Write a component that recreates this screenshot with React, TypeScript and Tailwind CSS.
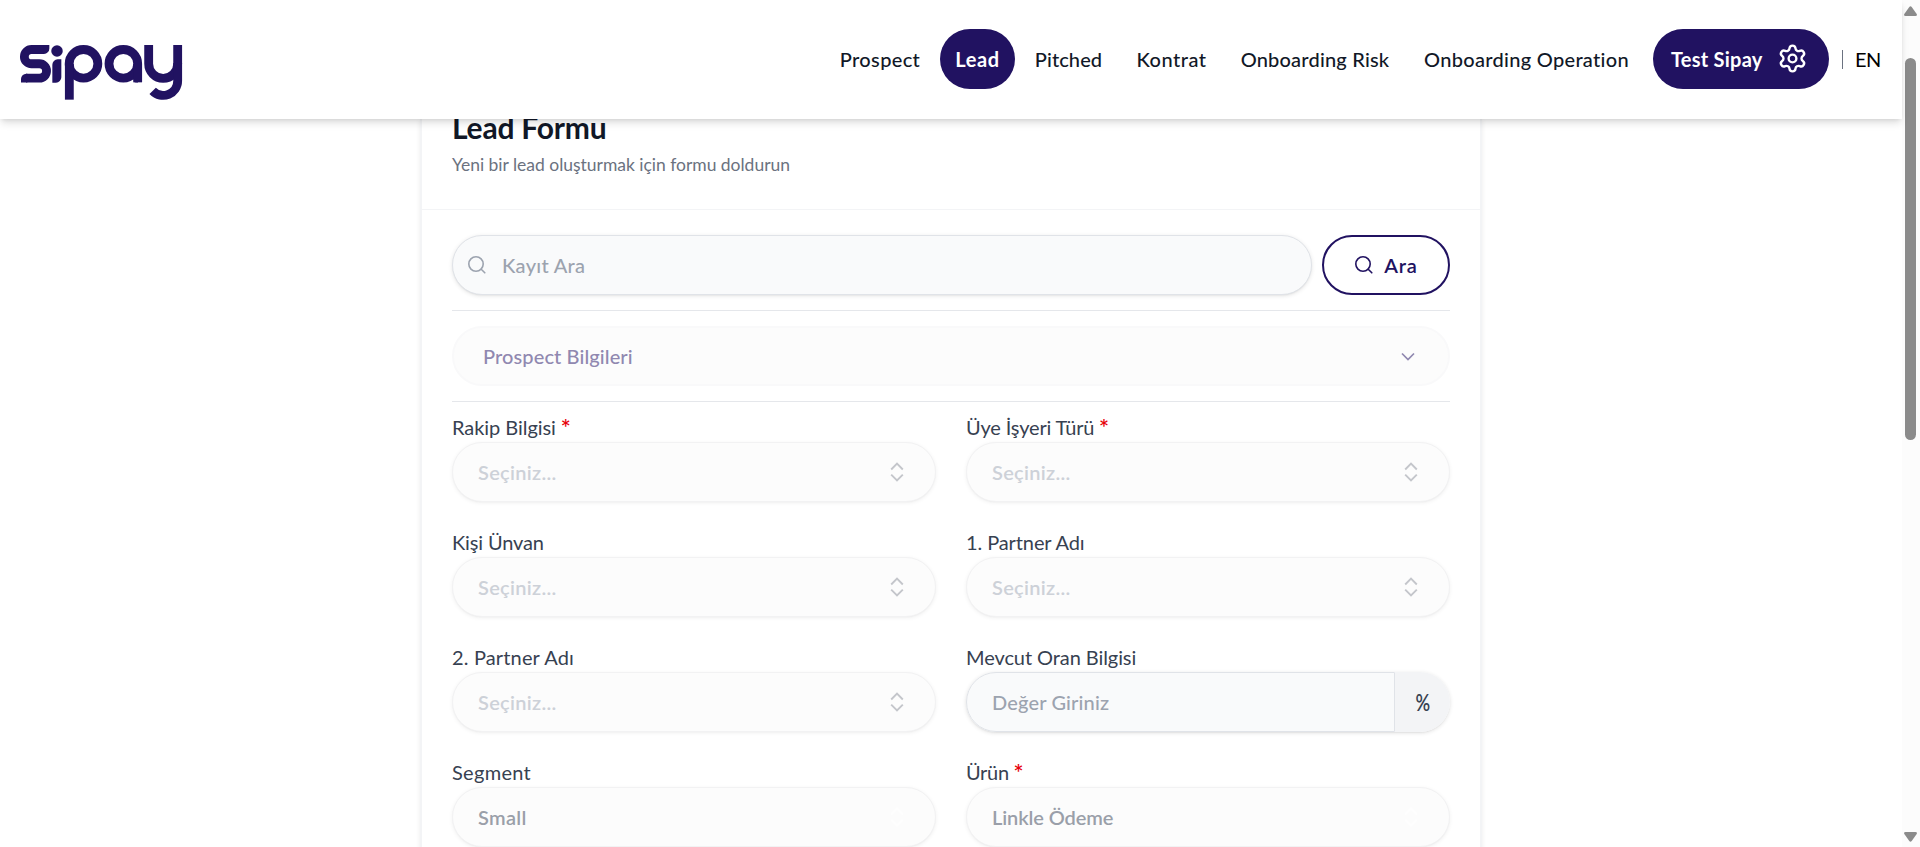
import React from "react";
import { Settings } from "lucide-react";

function Logo() {
  return (
    <svg width="164" height="57" viewBox="57 129 492 171" fill="none" stroke="#211261" strokeWidth="26.5" aria-label="sipay">
      <path d="M132 145.5H94.5a21.3 21.3 0 0 0 0 42.8H118a21.5 21.5 0 0 1 0 43.2H78" />
      <path stroke="none" fill="#211261" d="M130 132.3h18v10.4a16 16 0 0 1-16 16h-2zM82 244.7H63v-10.400a16 16 0 0 1 16-16h3zM184 175v54a16 16 0 0 1-16 16h-11v-54a16 16 0 0 1 16-16z" />
      <circle cx="171" cy="150" r="17.200" stroke="none" fill="#211261" />
      <circle cx="250.500" cy="188.500" r="43" />
      <path d="M208 188.500V296" />
      <circle cx="370" cy="188.500" r="43" />
      <path d="M413 188.500V244" />
      <path stroke="none" fill="#211261" d="M400 228h14v16.800h-7q-5 0-6-8z" />
      <path d="M446 132v56.500a43.500 43.500 0 0 0 87 0V132" />
      <path d="M533 186v53.500a43.500 43.500 0 0 1-75 30.200" />
    </svg>
  );
}

function SearchIcon() {
  return (
    <svg className="size-5 shrink-0" viewBox="0 0 20 20" fill="none" stroke="currentColor" strokeWidth="1.6" strokeLinecap="round">
      <circle cx="9" cy="9" r="7.200" />
      <path d="M14.200 14.200l3.600 3.600" />
    </svg>
  );
}

function Selector({ className }: { className: string }) {
  return (
    <svg className={className} width="14" height="20" viewBox="0 0 14 20" fill="none" stroke="currentColor" strokeWidth="1.9">
      <path d="M1.200 7.500L7 1.700l5.800 5.800M1.200 12.700L7 18.500l5.800-5.800" />
    </svg>
  );
}

const nav = [
  { label: "Prospect", cls: "w-[110px] tracking-[0.36px]" },
  { label: "Lead", cls: "w-[75px] tracking-[0.6px] bg-[#211261] font-bold text-white" },
  { label: "Pitched", cls: "w-[97px] tracking-[0.1px]" },
  { label: "Kontrat", cls: "w-[99px] tracking-[0.5px]" },
  { label: "Onboarding Risk", cls: "w-[178px] tracking-[0.2px]" },
  { label: "Onboarding Operation", cls: "w-[235px] tracking-[0.3px]" },
];

function Field({ label, tracking, required, children }: { label: string; tracking: string; required?: boolean; children: React.ReactNode }) {
  return (
    <div className="h-[115px]">
      <div className={`flex h-[25px] whitespace-nowrap leading-[20px] text-[#374151] ${tracking}`}>
        {label}
        {required && <span className="ml-[5px] font-['Inter',sans-serif] text-[19px] text-[#e7000b]">*</span>}
      </div>
      {children}
    </div>
  );
}

function Select({ text, chosen, tracking }: { text: string; chosen?: boolean; tracking: string }) {
  return (
    <div className={`flex h-[60px] items-center justify-between rounded-[30px] border border-[#f2f2f3] bg-[#fcfcfc] pl-[25px] pr-[31px] font-semibold shadow-[0_1px_4px_rgba(0,0,0,0.06),0_1px_2px_-1px_rgba(0,0,0,0.06)] ${tracking} ${chosen ? "text-[#9a9fa9]" : "text-[#cdd1d8]"}`}>
      <span>{text}</span>
      <Selector className={chosen ? "text-[#fefefe]" : "text-[#c4c6cb]"} />
    </div>
  );
}

export default function App() {
  return (
    <div className="flex h-[847px] overflow-hidden bg-white font-['Lato',sans-serif] text-[20px]">
      <div className="flex h-full w-[1902px] flex-col">
        <header className="relative z-10 flex h-[119px] shrink-0 items-center bg-white pb-[2px] pl-[19px] shadow-[0_5px_8px_-1px_rgba(0,0,0,0.12),0_2px_5px_-2px_rgba(0,0,0,0.12)]">
          <div className="mt-[27px]">
            <Logo />
          </div>
          <nav className="ml-[642px] flex gap-[5px] font-medium text-[#111827]">
            {nav.map((n) => (
              <a key={n.label} className={`flex h-[60px] items-center justify-center whitespace-nowrap rounded-[30px] ${n.cls}`}>
                {n.label}
              </a>
            ))}
          </nav>
          <button className="ml-[9px] flex h-[60px] w-[176px] items-center justify-between rounded-[30px] bg-[#211261] pl-[18px] pr-[21px] font-bold tracking-[0.25px] text-white">
            Test Sipay
            <Settings size={31} strokeWidth={1.85} />
          </button>
          <span className="ml-[13px] mt-[2px] h-[19px] w-px bg-[#6b7280]" />
          <span className="ml-[12px] tracking-[-0.6px] text-black">EN</span>
        </header>

        <main className="flex min-h-0 flex-1 justify-center overflow-hidden">
          <section className="h-[760px] w-[1062px] shrink-0 border-x-2 border-[#f3f4f6] bg-white shadow-[0_1px_5px_rgba(0,0,0,0.08)]">
            <div className="flow-root h-[91px] border-b border-[#f3f4f6] pl-[30px]">
              <h1 className="-mt-[11px] h-[38px] text-[30px] font-bold leading-[38px] tracking-[-0.2px] text-[#111827]">Lead Formu</h1>
              <p className="mt-[6px] text-[17.5px] leading-[25px] tracking-[-0.02px] text-[#6b7280]">Yeni bir lead oluşturmak için formu doldurun</p>
            </div>
            <div className="px-[30px] pt-[25px]">
              <div className="flex gap-[10px]">
                <div className="flex h-[60px] w-[860px] items-center gap-[15px] rounded-[30px] border border-[#e0e3e8] bg-[#f9fafb] pl-[14px] font-medium tracking-[0.3px] text-[#9ca3af] shadow-[0_1px_4px_rgba(0,0,0,0.1),0_1px_2px_-1px_rgba(0,0,0,0.1)]">
                  <SearchIcon />
                  <span>Kayıt Ara</span>
                </div>
                <button className="flex h-[60px] w-[128px] items-center justify-center gap-[10px] rounded-[30px] border-2 border-[#211261] bg-white font-semibold tracking-[0.8px] text-[#211261]">
                  <SearchIcon />
                  Ara
                </button>
              </div>
              <hr className="mt-[15px] border-[#e5e7eb]" />
              <div className="mt-[15px] flex h-[60px] items-center justify-between rounded-[30px] border-2 border-[#f9f9fa] bg-[#fcfcfc] pl-[29px] pr-[33px] font-medium tracking-[0.1px] text-[#9088b0]">
                <span>Prospect Bilgileri</span>
                <svg width="14" height="9" viewBox="0 0 14 9" fill="none" stroke="currentColor" strokeWidth="1.7">
                  <path d="M1 1.500l6 6 6-6" />
                </svg>
              </div>
              <hr className="mt-[15px] border-[#e5e7eb]" />
              <div className="mt-[15px] grid grid-cols-2 gap-x-[30px]">
                <Field label="Rakip Bilgisi" tracking="tracking-[-0.05px]" required>
                  <Select text="Seçiniz..." tracking="tracking-[0.3px]" />
                </Field>
                <Field label="Üye İşyeri Türü" tracking="tracking-[-0.15px]" required>
                  <Select text="Seçiniz..." tracking="tracking-[0.3px]" />
                </Field>
                <Field label="Kişi Ünvan" tracking="tracking-[-0.15px]">
                  <Select text="Seçiniz..." tracking="tracking-[0.3px]" />
                </Field>
                <Field label="1. Partner Adı" tracking="tracking-[-0.1px]">
                  <Select text="Seçiniz..." tracking="tracking-[0.3px]" />
                </Field>
                <Field label="2. Partner Adı" tracking="tracking-[0.15px]">
                  <Select text="Seçiniz..." tracking="tracking-[0.3px]" />
                </Field>
                <Field label="Mevcut Oran Bilgisi" tracking="tracking-[-0.08px]">
                  <div className="flex h-[60px] rounded-[30px] shadow-[0_1px_4px_rgba(0,0,0,0.12),0_1px_2px_-1px_rgba(0,0,0,0.12)]">
                    <div className="flex flex-1 items-center rounded-l-[30px] border border-[#e0e3e8] bg-[#f9fafb] pl-[25px] font-medium tracking-[0.15px] text-[#9ca3af]">
                      Değer Giriniz
                    </div>
                    <div className="flex w-[55px] items-center justify-center rounded-r-[30px] bg-[#f3f4f6] text-[#374151]">
                      <span className="inline-block scale-x-[0.82] text-[22px] font-semibold">%</span>
                    </div>
                  </div>
                </Field>
                <Field label="Segment" tracking="tracking-[0.3px]">
                  <Select text="Small" chosen tracking="tracking-[0.3px]" />
                </Field>
                <Field label="Ürün" tracking="tracking-[-0.3px]" required>
                  <Select text="Linkle Ödeme" chosen tracking="tracking-[-0.1px]" />
                </Field>
              </div>
            </div>
          </section>
        </main>
      </div>
      <aside className="flex h-full w-[18px] flex-col items-center bg-[#fcfcfc] pr-px pt-[6px]">
        <svg width="13" height="10" viewBox="0 0 13 10" fill="#8b8b8b">
          <path d="M5.300 0.900q1.200-1.400 2.400 0l5 7q.8 2.100-1.200 2.100H1.500Q-.5 10 .3 7.900z" />
        </svg>
        <div className="mt-[42px] h-[382px] w-[11px] rounded-full bg-[#8b8b8b]" />
        <svg className="mt-[392px]" width="13" height="10" viewBox="0 0 13 10" fill="#8b8b8b">
          <path d="M5.300 9.100q1.200 1.400 2.400 0l5-7Q13.500 0 11.500 0h-10Q-.5 0 .3 2.100z" />
        </svg>
      </aside>
    </div>
  );
}
